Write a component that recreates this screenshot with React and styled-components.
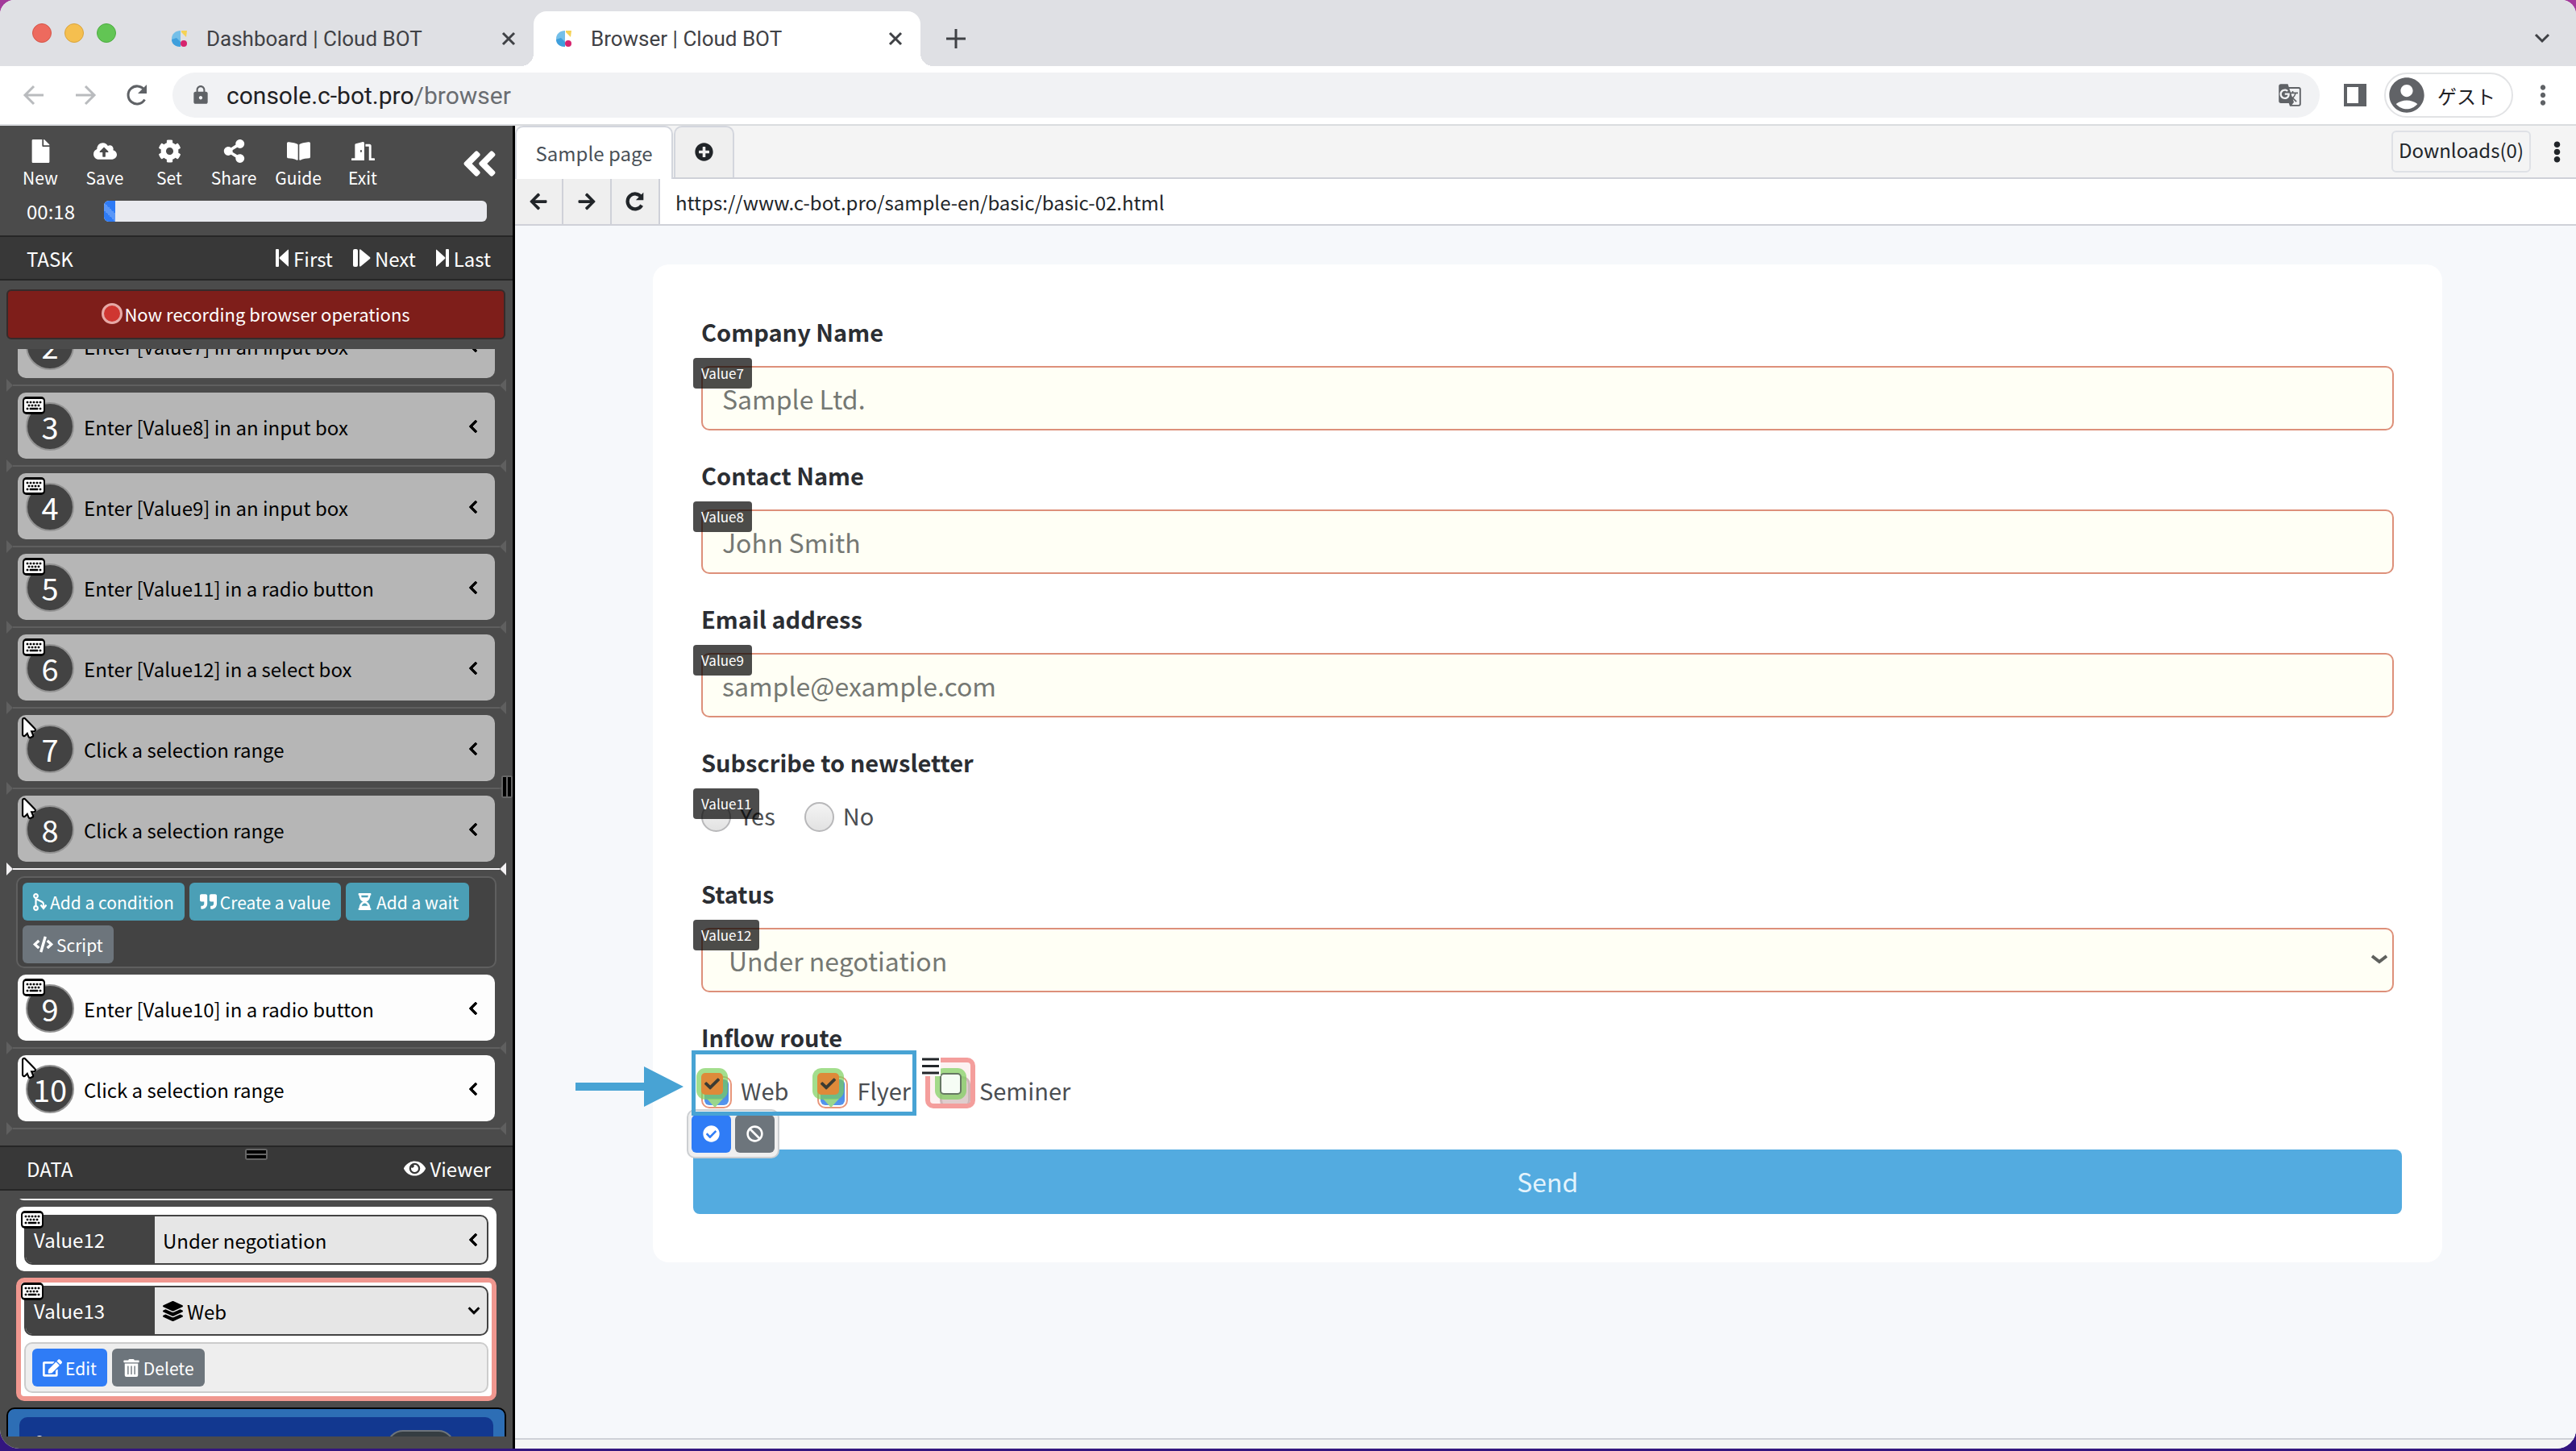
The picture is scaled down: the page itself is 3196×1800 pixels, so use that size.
import React from "react";
import styled, { createGlobalStyle, css } from "styled-components";
import {
  FaFile, FaCloudUploadAlt, FaCog, FaShareAlt, FaBookOpen, FaDoorOpen, FaAngleDoubleLeft,
  FaChevronLeft, FaChevronDown, FaKeyboard, FaMousePointer,
  FaQuoteRight, FaHourglassHalf, FaCode, FaEye, FaLayerGroup, FaEdit, FaTrashAlt,
  FaPlusCircle, FaArrowLeft, FaArrowRight, FaEllipsisV, FaCheckCircle, FaBan, FaCheck, FaUser,
} from "react-icons/fa";
import { MdLock, MdGTranslate, MdAccountCircle, MdMoreVert } from "react-icons/md";

const Global = createGlobalStyle`
  * { box-sizing: border-box; }
  body {
    margin: 0;
    background: linear-gradient(#a23a9a 0, #a23a9a 40px, #33157f 200px) no-repeat #33157f;
    font-family: "Noto Sans CJK JP", "Noto Sans", sans-serif;
    font-size: 24px;
    color: #212529;
  }
  button, input, select { font: inherit; color: inherit; margin: 0; }
  button { border: 0; padding: 0; background: none; }
  svg { flex: none; display: block; }
`;

/* ---------- window ---------- */
const Window = styled.div`
  display: flex;
  flex-direction: column;
  height: calc(100vh - 3px);
  border-radius: 18px 18px 24px 24px;
  overflow: hidden;
  background: #fff;
`;
const TabStrip = styled.div`
  display: flex;
  align-items: flex-end;
  height: 82px;
  flex: none;
  padding: 0 32px 0 40px;
  background: #dfe0e4;
  font-family: Roboto, "Liberation Sans", sans-serif;
  font-size: 26px;
  color: #3f4145;
`;
const Lights = styled.div`
  display: flex;
  gap: 16px;
  height: 82px;
  align-items: center;
  margin-right: 41px;
`;
const Light = styled.span`
  width: 24px;
  height: 24px;
  border-radius: 50%;
  background: ${(p) => p.$c};
  border: 1px solid ${(p) => p.$b};
`;
const BrowserTab = styled.div`
  position: relative;
  display: flex;
  align-items: center;
  width: ${(p) => p.$w}px;
  height: 68px;
  padding: 0 22px 0 28px;
  border-radius: 16px 16px 0 0;
  background: ${(p) => (p.$active ? "#fff" : "transparent")};
  ${(p) =>
    p.$active &&
    css`
      &::before,
      &::after {
        content: "";
        position: absolute;
        bottom: 0;
        width: 16px;
        height: 16px;
      }
      &::before {
        left: -16px;
        background: radial-gradient(circle at 0 0, transparent 16px, #fff 16px);
      }
      &::after {
        right: -16px;
        background: radial-gradient(circle at 100% 0, transparent 16px, #fff 16px);
      }
    `}
  span {
    flex: 1;
    margin-left: 23px;
  }
`;
const StripButton = styled.button`
  display: flex;
  align-items: center;
  height: 68px;
  margin-left: ${(p) => p.$ml};
`;
const Toolbar = styled.div`
  display: flex;
  align-items: center;
  flex: none;
  height: 74px;
  padding: 0 22px 0 10px;
  border-bottom: 2px solid #dadcdf;
  color: #5f6266;
`;
const NavIcons = styled.div`
  display: grid;
  grid-template-columns: repeat(3, 64px);
  align-items: center;
  width: 204px;
`;
const PlainButton = styled.button`
  display: flex;
  align-items: center;
  justify-content: center;
`;
const Omnibox = styled.div`
  display: flex;
  flex: 1;
  align-items: center;
  height: 56px;
  margin-right: 30px;
  padding: 0 22px;
  border-radius: 28px;
  background: #f1f2f4;
  font-family: Roboto, "Liberation Sans", sans-serif;
  font-size: 30px;
  p {
    flex: 1;
    margin: 0 0 0 19px;
    color: #6a6d71;
  }
  b {
    font-weight: 400;
    color: #1f2124;
  }
`;
const Profile = styled.button`
  display: flex;
  align-items: center;
  gap: 12px;
  width: 160px;
  height: 56px;
  margin: 0 18px 0 22px;
  border: 2px solid #e2e3e5;
  border-radius: 28px;
  font-size: 24px;
  color: #1f2124;
  svg {
    color: #616367;
  }
`;
const AppBody = styled.div`
  display: flex;
  flex: 1;
  min-height: 0;
`;

/* ---------- sidebar ---------- */
const Sidebar = styled.aside`
  position: relative;
  display: flex;
  flex-direction: column;
  flex: none;
  width: 639px;
  border-right: 3px solid #000;
  background: #4b4b4b;
  color: #fff;
`;
const Header = styled.header`
  flex: none;
  height: 136px;
  padding: 12px 16px 0 10px;
`;
const HeaderRow = styled.div`
  display: flex;
  align-items: center;
  height: 70px;
`;
const ToolButton = styled.button`
  display: flex;
  flex-direction: column;
  align-items: center;
  gap: 4px;
  width: 80px;
  font-size: 21px;
  line-height: 28px;
`;
const Collapse = styled(PlainButton)`
  margin-left: auto;
`;
const TimerRow = styled.div`
  display: flex;
  align-items: center;
  gap: 36px;
  margin-top: 8px;
  padding: 0 16px 0 23px;
  line-height: 32px;
`;
const Track = styled.div`
  flex: 1;
  height: 26px;
  border-radius: 6px;
  overflow: hidden;
  background: #e9eaef;
`;
const Fill = styled.div`
  width: 14px;
  height: 26px;
  background: linear-gradient(45deg, #2e7bf6 35%, #5a97f8 35%, #5a97f8 60%, #2e7bf6 60%);
`;
const PanelHead = styled.div`
  position: relative;
  display: flex;
  align-items: center;
  flex: none;
  height: 56px;
  padding: 0 27px 0 33px;
  gap: 25px;
  border: solid #262626;
  border-width: 2px 0;
  background: #383838;
  h2 {
    flex: 1;
    margin: 0;
    font-size: 24px;
    font-weight: 400;
  }
`;
const HeadButton = styled.button`
  display: flex;
  align-items: center;
  gap: 5px;
`;
const Grip = styled.span`
  position: absolute;
  display: flex;
  justify-content: space-between;
  padding: 2px;
  border-radius: 3px;
  background: #666;
  i {
    background: #000;
  }
  ${(p) =>
    p.$vertical
      ? css`
          right: 0;
          top: 806px;
          width: 14px;
          height: 28px;
          i { width: 4px; }
        `
      : css`
          left: 304px;
          top: 2px;
          width: 28px;
          height: 14px;
          flex-direction: column;
          i { height: 4px; }
        `}
`;
const Recording = styled.div`
  display: flex;
  align-items: center;
  justify-content: center;
  gap: 2px;
  flex: none;
  height: 62px;
  margin: 11px 9px 12px 8px;
  padding-bottom: 2px;
  border: 2px solid #352b2b;
  border-radius: 6px;
  background: #7e1e1a;
  font-size: 22px;
`;
const Dot = styled.i`
  width: 26px;
  height: 26px;
  border-radius: 50%;
  border: 3px solid #e6a9a6;
  background: #cf3631;
`;
const TaskList = styled.div`
  display: flex;
  flex-direction: column;
  justify-content: flex-end;
  flex: 1;
  min-height: 0;
  overflow: hidden;
  padding: 0 8px 12px;
`;
const Task = styled.div`
  position: relative;
  display: flex;
  align-items: center;
  flex: none;
  height: 82px;
  margin: 0 14px;
  padding: 2px 18px 0 10px;
  border-radius: 10px;
  background: ${(p) => (p.$done ? "#b6b6b6" : "#fdfdfd")};
  color: #000;
  span {
    flex: 1;
    margin-left: 12px;
  }
`;
const Num = styled.b`
  display: flex;
  align-items: center;
  justify-content: center;
  width: 60px;
  height: 60px;
  border-radius: 50%;
  border: 2px solid #939393;
  background: #434343;
  color: #fff;
  font-weight: 400;
  font-size: 38px;
  line-height: 50px;
`;
const KbdBadge = styled.i`
  position: absolute;
  left: 6px;
  top: 5px;
  padding: 0 2px;
  border-radius: 5px;
  background: #000;
  color: #fff;
  height: 22px;
  display: flex;
  align-items: center;
  overflow: hidden;
`;
const MouseBadge = styled.i`
  position: absolute;
  left: 3px;
  top: 5px;
  color: #fff;
  svg {
    overflow: visible;
    stroke: #000;
    stroke-width: 100px;
    paint-order: stroke;
  }
`;
const Chevron = styled.i`
  svg {
    overflow: visible;
    stroke: #000;
    stroke-width: 24px;
  }
`;
const Sep = styled.div`
  display: flex;
  align-items: center;
  flex: none;
  height: 18px;
  color: ${(p) => (p.$on ? "#f4f2f4" : "#5f5f5f")};
  &::before,
  &::after {
    content: "";
    border: solid transparent;
    border-width: 8px 0;
  }
  &::before {
    border-left: 8px solid;
  }
  &::after {
    border-right: 8px solid;
  }
  hr {
    flex: 1;
    height: 2px;
    margin: 0;
    border: 0;
    background: ${(p) => (p.$on ? "#f4f2f4" : "#5f5f5f")};
  }
`;
const Actions = styled.div`
  display: flex;
  flex-wrap: wrap;
  gap: 6px;
  flex: none;
  margin: ${(p) => (p.$light ? "8px 4px 0" : "0 12px 8px")};
  padding: ${(p) => (p.$light ? "6px 8px" : "6px 6px 4px")};
  border: 2px solid ${(p) => (p.$light ? "#ccc" : "#5f5f5f")};
  border-radius: 10px;
  background: ${(p) => (p.$light ? "#eee" : "#434343")};
`;
const ActionButton = styled.button`
  display: flex;
  align-items: center;
  gap: 4px;
  height: 47px;
  padding: 0 13px;
  border-radius: 6px;
  background: ${(p) => p.$bg};
  color: #fff;
  font-size: 21px;
`;
const DataPane = styled.section`
  display: flex;
  flex-direction: column;
  flex: none;
  height: 376px;
`;
const DataView = styled.div`
  height: 295px;
  margin-top: 10px;
  padding: 0 8px;
  overflow: hidden;
`;
const DataScroll = styled.div`
  margin-top: -78px;
`;
const DataCard = styled.div`
  position: relative;
  margin: 0 12px 8px;
  padding: ${(p) => (p.$on ? "4px 0" : "10px 6px 8px")};
  border: ${(p) => (p.$on ? 6 : 0)}px solid #f0978f;
  border-radius: 10px;
  background: #fff;
  min-height: 80px;
  & > ${KbdBadge} {
    left: ${(p) => (p.$on ? 0 : 6)}px;
    top: ${(p) => (p.$on ? 0 : 5)}px;
  }
`;
const DataRow = styled.div`
  display: flex;
  align-items: center;
  height: 62px;
  margin: 0 4px;
  border: 2px solid #434343;
  border-radius: 10px;
  overflow: hidden;
  background: #e6e6e6;
  color: #000;
  padding-right: 8px;
  b {
    width: 160px;
    line-height: 60px;
    padding-left: 10px;
    background: #434343;
    color: #fff;
    font-weight: 400;
  }
  span {
    display: flex;
    align-items: center;
    gap: 5px;
    flex: 1;
    padding-left: 10px;
  }
`;
const System = styled.div`
  height: 120px;
  padding: 10px 14px;
  border: 2px solid #000;
  border-radius: 10px;
  background: #2d6eb5;
`;
const SystemInner = styled.div`
  display: flex;
  justify-content: space-between;
  align-items: flex-start;
  height: 100px;
  padding: 16px 48px 0 14px;
  border-radius: 10px;
  background: #123890;
  span {
    display: flex;
    gap: 8px;
    align-items: center;
  }
`;
const Toggle = styled.i`
  width: 84px;
  height: 40px;
  border: 2px solid #6d747b;
  border-radius: 20px;
  background: #353d42;
`;

/* ---------- page viewer ---------- */
const Viewer = styled.main`
  display: flex;
  flex-direction: column;
  flex: 1;
  min-width: 0;
  background: #f4f4f4;
`;
const PageTabs = styled.div`
  display: flex;
  height: 66px;
  flex: none;
  border-bottom: 2px solid #cfd1d8;
`;
const PageTab = styled.button`
  display: flex;
  align-items: center;
  justify-content: center;
  width: ${(p) => p.$w}px;
  margin-right: 1px;
  padding-bottom: 2px;
  height: ${(p) => (p.$on ? 66 : 64)}px;
  border: 2px solid #d3d6dd;
  border-bottom: 0;
  border-radius: 10px 10px 0 0;
  background: ${(p) => (p.$on ? "#fff" : "#efefef")};
  color: ${(p) => (p.$on ? "#495057" : "#212529")};
`;
const Downloads = styled.button`
  align-self: center;
  height: 52px;
  padding: 0 7px 5px;
  margin-left: auto;
  border: 2px solid #dfe1e6;
  border-radius: 6px;
`;
const PageKebab = styled(PlainButton)`
  width: 56px;
  padding-left: 8px;
`;
const PageNav = styled.div`
  display: flex;
  flex: none;
  height: 58px;
  border-bottom: 2px solid #cfd1d8;
  background: #fff;
`;
const NavButton = styled(PlainButton)`
  width: 60px;
  border-right: 2px solid #cfd1d8;
  background: #efefef;
`;
const Address = styled.input`
  flex: 1;
  border: 0;
  padding: 0 19px;
  background: transparent;
`;
const Canvas = styled.div`
  flex: 1;
  min-height: 0;
  padding: 48px 166px 0 171px;
  border-bottom: 2px solid #cfd1d8;
  background: #f6f8fb;
`;
const Footer = styled.div`
  flex: none;
  height: 11px;
`;
const Form = styled.form`
  padding: 63px 50px 60px;
  border-radius: 20px;
  background: #fff;
`;
const Field = styled.div`
  margin: 0 10px 35px;
`;
const FieldLabel = styled.label`
  display: block;
  margin-bottom: 23px;
  font-size: 29px;
  font-weight: 700;
  line-height: 40px;
  color: #2b2e33;
`;
const Control = styled.div`
  position: relative;
`;
const control = css`
  display: block;
  width: 100%;
  height: 80px;
  padding: 0 24px 1px;
  border: 2px solid #dd907a;
  border-radius: 10px;
  background: #fffff5;
  font-size: 32px;
  color: #757873;
`;
const TextInput = styled.input`
  ${control}
  &::placeholder {
    color: #757873;
    opacity: 1;
  }
`;
const Select = styled.select`
  ${control}
  padding: 0 32px 1px;
  appearance: none;
`;
const SelectArrow = styled.svg`
  position: absolute;
  right: 8px;
  top: 33px;
`;
const Badge = styled.span`
  position: absolute;
  left: -10px;
  top: -10px;
  padding: 0 10px;
  border-radius: 4px;
  background: rgba(0, 0, 0, 0.7);
  color: #fff;
  font-size: 17px;
  line-height: 38px;
`;
const Choices = styled.div`
  position: relative;
  display: flex;
  align-items: flex-start;
  gap: 36px;
  height: ${(p) => p.$h}px;
`;
const Choice = styled.label`
  position: relative;
  display: flex;
  align-items: center;
  gap: 11px;
  height: 46px;
  font-size: 29px;
  color: #4b4e52;
  input {
    margin-top: 5px;
  }
`;
const Radio = styled.input`
  appearance: none;
  width: 37px;
  height: 37px;
  border: 2px solid #b8b8ba;
  border-radius: 50%;
  background: linear-gradient(#f4f4f4, #e2e2e2);
`;
const Tick = styled.input`
  appearance: none;
  width: 38px;
  height: 40px;
  border: 2px solid #e8967b;
  border-radius: 10px;
  background: #fff;
  padding: 2px;
  &:checked {
    background: linear-gradient(#3f7de0, #5596ee) content-box;
  }
  &:not(:checked) {
    border: 3px solid #c9bcbd;
    background: #ddd5d6;
  }
`;
const Marker = styled.i`
  position: absolute;
  left: 0;
  top: 2px;
  display: flex;
  align-items: center;
  justify-content: center;
  width: 27px;
  height: 27px;
  border-radius: 5px;
  background: ${(p) => (p.$on ? "#de8a3a" : "#f6fdf5")};
  border: ${(p) => (p.$on ? 0 : 2)}px solid #667863;
  box-shadow: 0 0 0 6px rgba(124, 208, 92, 0.7);
  color: #3b3b33;
`;
const Tail = styled.i`
  position: absolute;
  left: 7px;
  top: 34px;
  border: solid transparent;
  border-width: 11px 10px 0;
  border-top-color: #9ad68c;
`;
const Focus = styled.i`
  position: absolute;
  left: -18px;
  top: -17px;
  width: 62px;
  height: 63px;
  border: 6px solid #f49e9c;
  border-radius: 10px;
  background: rgba(244, 158, 156, 0.14);
`;
const Handle = styled.i`
  position: absolute;
  left: -23px;
  top: -19px;
  width: 24px;
  height: 25px;
  padding: 2px 2px 0 1px;
  background: #fff;
  svg {
    width: 21px;
    height: 21px;
  }
`;
const Highlight = styled.div`
  position: absolute;
  left: -12px;
  top: -26px;
  width: 279px;
  height: 81px;
  border: 5px solid #48a3d4;
`;
const Pointer = styled.svg`
  position: absolute;
  left: -156px;
  top: -6px;
`;
const Popup = styled.div`
  position: absolute;
  left: -18px;
  top: 47px;
  display: flex;
  gap: 5px;
  padding: 5px 4px;
  border: 2px solid #cccfd2;
  border-radius: 10px;
  background: #efefef;
`;
const PopButton = styled(PlainButton)`
  width: 49px;
  height: 47px;
  border-radius: 6px;
  background: ${(p) => p.$bg};
  color: #fff;
`;
const Send = styled.button`
  display: block;
  width: 100%;
  height: 80px;
  padding-bottom: 2px;
  border-radius: 8px;
  background: #53abe0;
  color: #e4f3fc;
  font-size: 32px;
`;

/* ---------- drawings ---------- */
const Favicon = () => (
  <svg width="20" height="22" viewBox="0 0 20 22">
    <path d="M11 1C5 1 0 5 0 11s5 10 11 10z" fill="#74bfe8" />
    <path d="M0 12l6-2 5 5v6C5 21 0 18 0 12z" fill="#3f9fdc" />
    <path d="M12 1h7l-1 8-6-6z" fill="#f5d254" />
    <circle cx="15" cy="17" r="4" fill="#d6246e" />
  </svg>
);
const Cross = () => (
  <svg width="18" height="18" viewBox="0 0 18 18" stroke="#3f4145" strokeWidth="3">
    <path d="M2 2l14 14M16 2L2 16" />
  </svg>
);
const ThinArrow = ({ flip }) => (
  <svg width="28" height="28" viewBox="0 0 28 28" fill="none" stroke="#b9bbbe" strokeWidth="3">
    <path d={flip ? "M2 14h23M14 3l11 11-11 11" : "M26 14H3M14 3L3 14l11 11"} />
  </svg>
);
const Reload = ({ size, weight }) => (
  <svg width={size} height={size} viewBox="0 0 28 28" fill="none" stroke="currentColor" strokeWidth={weight}>
    <path d="M23.500 19.500A11 11 0 1 1 23 7.500" />
    <path d="M26 1v11H15z" fill="currentColor" stroke="none" />
  </svg>
);
const PanelIcon = () => (
  <svg width="28" height="28" viewBox="0 0 28 28">
    <path fillRule="evenodd" d="M0 0h28v28H0zM4 4v20h14V4z" fill="#5f6266" />
  </svg>
);
const FirstIcon = () => (
  <svg width="17" height="22" viewBox="0 0 17 22" fill="#fff">
    <rect x="0" y="0" width="4" height="22" rx="1" />
    <path d="M16 1v20q0 1-1 0L5 12q-1-1 0-2L15 1q1-1 1 0z" />
  </svg>
);
const LastIcon = () => (
  <svg width="17" height="22" viewBox="0 0 17 22" fill="#fff">
    <rect x="12" y="0" width="4" height="22" rx="1" />
    <path d="M0 1v20q0 1 1 0l10-9q1-1 0-2L1 1Q0 0 0 1z" />
  </svg>
);
const NextIcon = () => (
  <svg width="22" height="24" viewBox="0 0 22 24" fill="#fff">
    <rect x="0" y="1" width="6" height="22" rx="2" />
    <path d="M8 3c0-2 1-2 2-1l11 9q1 1 0 2l-11 9c-1 1-2 1-2-1z" />
  </svg>
);
const BranchIcon = () => (
  <svg width="17" height="22" viewBox="0 0 17 22" fill="none" stroke="#fff" strokeWidth="2.200">
    <circle cx="3.500" cy="3.500" r="2.300" />
    <circle cx="3.500" cy="18.500" r="2.300" />
    <path d="M3.500 6v10M3.500 7l8 4q1.500 1 1.500 3v4M9.500 14.500L13 19l3.500-4.500" />
  </svg>
);

const tools = [
  ["New", FaFile], ["Save", FaCloudUploadAlt], ["Set", FaCog],
  ["Share", FaShareAlt], ["Guide", FaBookOpen], ["Exit", FaDoorOpen],
];
const done = [
  [2, "Enter [Value7] in an input box", "k"],
  [3, "Enter [Value8] in an input box", "k"],
  [4, "Enter [Value9] in an input box", "k"],
  [5, "Enter [Value11] in a radio button", "k"],
  [6, "Enter [Value12] in a select box", "k"],
  [7, "Click a selection range", "m"],
  [8, "Click a selection range", "m"],
];
const todo = [
  [9, "Enter [Value10] in a radio button", "k"],
  [10, "Click a selection range", "m"],
];

const Kbd = () => (
  <KbdBadge><FaKeyboard size={24} /></KbdBadge>
);
const TaskItem = ({ n, text, kind, isDone }) => (
  <Task $done={isDone}>
    <Num>{n}</Num>
    {kind === "k" ? <Kbd /> : <MouseBadge><FaMousePointer size={22} /></MouseBadge>}
    <span>{text}</span>
    <Chevron><FaChevronLeft size={18} /></Chevron>
  </Task>
);
const TextField = ({ id, label, value, badge }) => (
  <Field>
    <FieldLabel htmlFor={id}>{label}</FieldLabel>
    <Control>
      <TextInput id={id} placeholder={value} />
      <Badge>{badge}</Badge>
    </Control>
  </Field>
);

export default function App() {
  return (
    <>
      <Global />
      <Window>
        <TabStrip>
          <Lights>
            <Light $c="#ed6a5e" $b="#d55548" />
            <Light $c="#f5bf4f" $b="#d9a43c" />
            <Light $c="#62c554" $b="#4dac41" />
          </Lights>
          <BrowserTab $w={477}>
            <Favicon />
            <span>Dashboard | Cloud BOT</span>
            <Cross />
          </BrowserTab>
          <BrowserTab $w={480} $active>
            <Favicon />
            <span>Browser | Cloud BOT</span>
            <Cross />
          </BrowserTab>
          <StripButton $ml="32px" aria-label="New tab">
            <svg width="24" height="24" viewBox="0 0 24 24" stroke="#3f4145" strokeWidth="3">
              <path d="M12 0v24M0 12h24" />
            </svg>
          </StripButton>
          <StripButton $ml="auto" aria-label="Search tabs">
            <svg width="20" height="14" viewBox="0 0 20 14" fill="none" stroke="#3f4145" strokeWidth="3">
              <path d="M2 2l8 8 8-8" />
            </svg>
          </StripButton>
        </TabStrip>
        <Toolbar>
          <NavIcons>
            <PlainButton aria-label="Back"><ThinArrow /></PlainButton>
            <PlainButton aria-label="Forward"><ThinArrow flip /></PlainButton>
            <PlainButton aria-label="Reload"><Reload size={28} weight={3} /></PlainButton>
          </NavIcons>
          <Omnibox>
            <MdLock size={26} />
            <p><b>console.c-bot.pro</b>/browser</p>
            <MdGTranslate size={30} />
          </Omnibox>
          <PanelIcon />
          <Profile>
            <MdAccountCircle size={52} />
            ゲスト
          </Profile>
          <PlainButton aria-label="Menu"><MdMoreVert size={38} /></PlainButton>
        </Toolbar>
        <AppBody>
          <Sidebar>
            <Header>
              <HeaderRow>
                {tools.map(([name, Icon]) => (
                  <ToolButton key={name}>
                    <Icon size={29} />
                    {name}
                  </ToolButton>
                ))}
                <Collapse aria-label="Collapse"><FaAngleDoubleLeft size={50} /></Collapse>
              </HeaderRow>
              <TimerRow>
                00:18
                <Track><Fill /></Track>
              </TimerRow>
            </Header>
            <PanelHead>
              <h2>TASK</h2>
              <HeadButton><FirstIcon />First</HeadButton>
              <HeadButton><NextIcon />Next</HeadButton>
              <HeadButton><LastIcon />Last</HeadButton>
            </PanelHead>
            <Recording><Dot />Now recording browser operations</Recording>
            <TaskList>
              {done.map(([n, text, kind]) => (
                <React.Fragment key={n}>
                  <TaskItem n={n} text={text} kind={kind} isDone />
                  <Sep $on={n === 8}><hr /></Sep>
                </React.Fragment>
              ))}
              <Actions>
                <ActionButton $bg="#4b9fb6"><BranchIcon />Add a condition</ActionButton>
                <ActionButton $bg="#4b9fb6"><FaQuoteRight size={21} />Create a value</ActionButton>
                <ActionButton $bg="#4b9fb6"><FaHourglassHalf size={21} />Add a wait</ActionButton>
                <ActionButton $bg="#6d757c"><FaCode size={25} />Script</ActionButton>
              </Actions>
              {todo.map(([n, text, kind]) => (
                <React.Fragment key={n}>
                  <TaskItem n={n} text={text} kind={kind} />
                  <Sep><hr /></Sep>
                </React.Fragment>
              ))}
            </TaskList>
            <DataPane>
              <PanelHead>
                <Grip><i /><i /></Grip>
                <h2>DATA</h2>
                <HeadButton><FaEye size={27} />Viewer</HeadButton>
              </PanelHead>
              <DataView>
                <DataScroll>
                  <DataCard />
                  <DataCard>
                    <DataRow>
                      <b>Value12</b>
                      <span>Under negotiation</span>
                      <Chevron><FaChevronLeft size={18} /></Chevron>
                    </DataRow>
                    <Kbd />
                  </DataCard>
                  <DataCard $on>
                    <DataRow>
                      <b>Value13</b>
                      <span><FaLayerGroup size={25} />Web</span>
                      <Chevron><FaChevronDown size={16} /></Chevron>
                    </DataRow>
                    <Kbd />
                    <Actions $light>
                      <ActionButton $bg="#2f7cf6"><FaEdit size={24} />Edit</ActionButton>
                      <ActionButton $bg="#6d757c"><FaTrashAlt size={22} />Delete</ActionButton>
                    </Actions>
                  </DataCard>
                  <System>
                    <SystemInner>
                      <span><FaUser size={22} />Bot data</span>
                      <Toggle />
                    </SystemInner>
                  </System>
                </DataScroll>
              </DataView>
            </DataPane>
            <Grip $vertical><i /><i /></Grip>
          </Sidebar>
          <Viewer>
            <PageTabs>
              <PageTab $w={196} $on>Sample page</PageTab>
              <PageTab $w={75} aria-label="Add page"><FaPlusCircle size={23} /></PageTab>
              <Downloads>Downloads(0)</Downloads>
              <PageKebab aria-label="More"><FaEllipsisV size={27} /></PageKebab>
            </PageTabs>
            <PageNav>
              <NavButton aria-label="Back"><FaArrowLeft size={24} /></NavButton>
              <NavButton aria-label="Forward"><FaArrowRight size={24} /></NavButton>
              <NavButton aria-label="Reload"><Reload size={24} weight={5} /></NavButton>
              <Address aria-label="Address" defaultValue="https://www.c-bot.pro/sample-en/basic/basic-02.html" />
            </PageNav>
            <Canvas>
              <Form>
                <TextField id="company" label="Company Name" value="Sample Ltd." badge="Value7" />
                <TextField id="contact" label="Contact Name" value="John Smith" badge="Value8" />
                <TextField id="email" label="Email address" value="sample@example.com" badge="Value9" />
                <Field>
                  <FieldLabel as="div">Subscribe to newsletter</FieldLabel>
                  <Choices $h={65}>
                    <Choice><Radio type="radio" name="news" />Yes</Choice>
                    <Choice><Radio type="radio" name="news" />No</Choice>
                    <Badge>Value11</Badge>
                  </Choices>
                </Field>
                <Field>
                  <FieldLabel htmlFor="status">Status</FieldLabel>
                  <Control>
                    <Select id="status"><option>Under negotiation</option></Select>
                    <SelectArrow width="20" height="13" viewBox="0 0 20 13" fill="none" stroke="#5f615d" strokeWidth="4">
                      <path d="M1 2l9 7 9-7" />
                    </SelectArrow>
                    <Badge>Value12</Badge>
                  </Control>
                </Field>
                <Field>
                  <FieldLabel as="div">Inflow route</FieldLabel>
                  <Choices $h={62}>
                    <Popup>
                      <PopButton type="button" $bg="#2f7cf6" aria-label="Confirm"><FaCheckCircle size={21} /></PopButton>
                      <PopButton type="button" $bg="#6d757c" aria-label="Cancel"><FaBan size={21} /></PopButton>
                    </Popup>
                    <Choice>
                      <Tick type="checkbox" defaultChecked />
                      <Tail /><Marker $on><FaCheck size={19} /></Marker>
                      Web
                    </Choice>
                    <Choice>
                      <Tick type="checkbox" defaultChecked />
                      <Tail /><Marker $on><FaCheck size={19} /></Marker>
                      Flyer
                    </Choice>
                    <Choice>
                      <Tick type="checkbox" />
                      <Focus /><Marker />
                      <Handle>
                        <svg viewBox="0 0 21 21" stroke="#212529" strokeWidth="3">
                          <path d="M0 2h21M0 10.500h21M0 19h21" />
                        </svg>
                      </Handle>
                      Seminer
                    </Choice>
                    <Highlight />
                    <Pointer width="134" height="50" viewBox="0 0 134 50" fill="#48a3d4">
                      <path d="M0 20h85V0l49 25-49 25V30H0z" />
                    </Pointer>
                  </Choices>
                </Field>
                <Send type="button">Send</Send>
              </Form>
            </Canvas>
            <Footer />
          </Viewer>
        </AppBody>
      </Window>
    </>
  );
}
